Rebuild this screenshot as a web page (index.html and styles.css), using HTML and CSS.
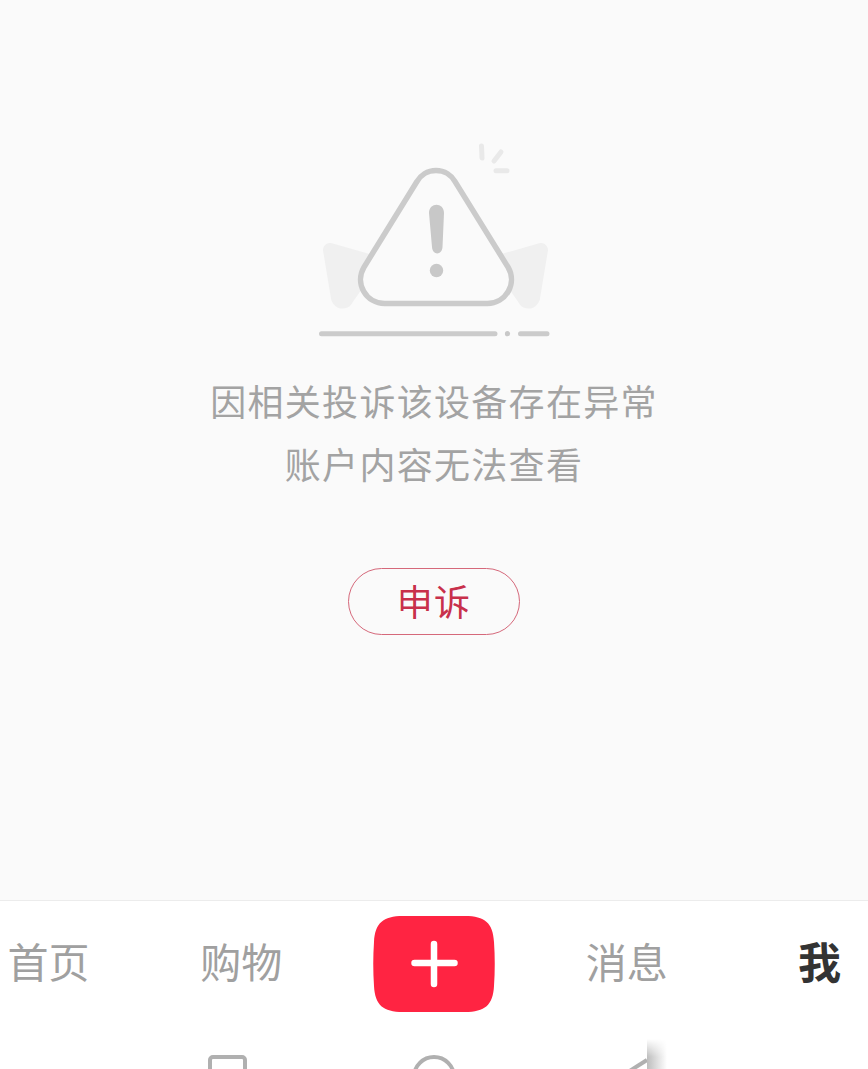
FILE: index.html
```html
<!DOCTYPE html>
<html lang="zh-CN">
<head>
    <meta charset="UTF-8">
    <meta name="viewport" content="width=device-width, initial-scale=1.0">
    <title>申诉</title>
    <link rel="stylesheet" href="styles.css">
</head>
<body>
    <div class="page">
        <main class="notice">
            <svg class="warn-art" width="240" height="200" viewBox="314 140 240 200">
                <path class="wing" d="M330 250 L372 262 L345 301 Q340 303 338 298 Z"/>
                <path class="wing" d="M541 250 L499 262 L526 301 Q531 303 533 298 Z"/>
                <path class="warn-tri" d="M417.1 181.3 A22 22 0 0 1 454.9 181.3 L508.1 267.3 A24 24 0 0 1 487.5 303.5 L384.5 303.5 A24 24 0 0 1 363.9 267.3 Z"/>
                <path class="warn-mark" d="M429 213 C429 202 444 202 444 213 L442.500 247 C442 255.500 432.500 255.500 432 247 Z"/>
                <circle class="warn-mark" cx="436.500" cy="270.500" r="6.700"/>
                <path class="spark" d="M481.500 146 L482 158 M501 152 L494 161 M496 170.700 L507 170.700"/>
                <path class="ground" d="M321.500 333.700 H495 M520.500 333.700 H547"/>
                <circle class="warn-mark" cx="507.500" cy="333.700" r="2.600"/>
            </svg>
            <p class="notice-text">因相关投诉该设备存在异常<br>账户内容无法查看</p>
            <a class="appeal-btn">申诉</a>
        </main>

        <nav class="tabbar">
            <a class="tab">首页</a>
            <a class="tab">购物</a>
            <a class="tab tab-add">
                <svg class="add-btn" width="122" height="96" viewBox="0 0 122 96">
                    <path class="add-bg" d="M30 0 H92 C112 0 120 7 121 26 Q122.500 48 121 70 C120 89 112 96 92 96 H30 C10 96 2 89 1 70 Q-0.500 48 1 26 C2 7 10 0 30 0 Z"/>
                    <path class="add-plus" d="M61 28 V68 M41.500 47 H81.500"/>
                </svg>
            </a>
            <a class="tab">消息</a>
            <a class="tab tab-active">我</a>
        </nav>

        <div class="sysbar">
            <svg class="sys-icon" width="206" height="44" viewBox="0 0 206 44"><rect x="85" y="2" width="35" height="40" rx="3"/></svg>
            <svg class="sys-icon" width="206" height="44" viewBox="0 0 206 44"><circle cx="103" cy="22" r="20"/></svg>
            <svg class="sys-icon" width="206" height="44" viewBox="0 0 206 44"><path d="M110 5 L80 24"/></svg>
            <div class="panel-shadow"></div>
        </div>
    </div>
</body>
</html>
```

FILE: styles.css
```css
html, body { margin: 0; height: 100%; overflow: hidden; }
body { font-family: "Noto Sans CJK SC", "Noto Sans", sans-serif; background: #fff; }
.page { height: 1069px; display: flex; flex-direction: column; overflow: hidden; }

.notice { height: 900px; box-sizing: border-box; padding-top: 140px; background: #fafafa; display: flex; flex-direction: column; align-items: center; }
.warn-art { display: block; }
.wing { fill: #f0f0f0; stroke: #f0f0f0; stroke-width: 14; stroke-linejoin: round; }
.warn-tri { fill: #fafafa; stroke: #cbcbcb; stroke-width: 5.5; }
.warn-mark { fill: #c8c8c8; }
.spark { fill: none; stroke: #e9e9e9; stroke-width: 5; stroke-linecap: round; }
.ground { fill: none; stroke: #cbcbcb; stroke-width: 5; stroke-linecap: round; }

.notice-text { margin: 29px 0 3px; font-size: 36px; line-height: 63px; letter-spacing: 1.3px; color: #a3a3a3; text-align: center; }
.appeal-btn { margin-top: 70px; width: 172px; height: 67px; box-sizing: border-box; padding-bottom: 4px; border: 1px solid #d5687a; border-radius: 34px; display: flex; align-items: center; justify-content: center; font-size: 36px; letter-spacing: 1.3px; color: #c8304b; }

.tabbar { height: 127px; box-sizing: border-box; border-top: 1px solid #ececec; display: grid; grid-template-columns: repeat(5, 192.75px); justify-content: center; align-items: center; padding-bottom: 1px; }
.tab { display: flex; justify-content: center; padding-bottom: 8px; font-size: 41px; line-height: 56px; color: #a0a0a0; }
.tab-add { padding-bottom: 0; }
.tab-active { font-size: 43px; font-weight: 700; color: #333; }
.add-btn { display: block; }
.add-bg { fill: #ff2442; }
.add-plus { fill: none; stroke: #fff; stroke-width: 6.5; stroke-linecap: round; }

.sysbar { position: relative; flex: 1; display: grid; grid-template-columns: repeat(3, 206px); justify-content: center; padding-top: 28px; overflow: hidden; }
.sys-icon { display: block; fill: none; stroke: #b0b0b0; stroke-width: 4; }
.panel-shadow { position: absolute; left: 647px; top: 12px; width: 20px; height: 30px; background: linear-gradient(to right, #bdbdbd, #fff); -webkit-mask-image: linear-gradient(to bottom, transparent, #000 60%); mask-image: linear-gradient(to bottom, transparent, #000 60%); }
```
